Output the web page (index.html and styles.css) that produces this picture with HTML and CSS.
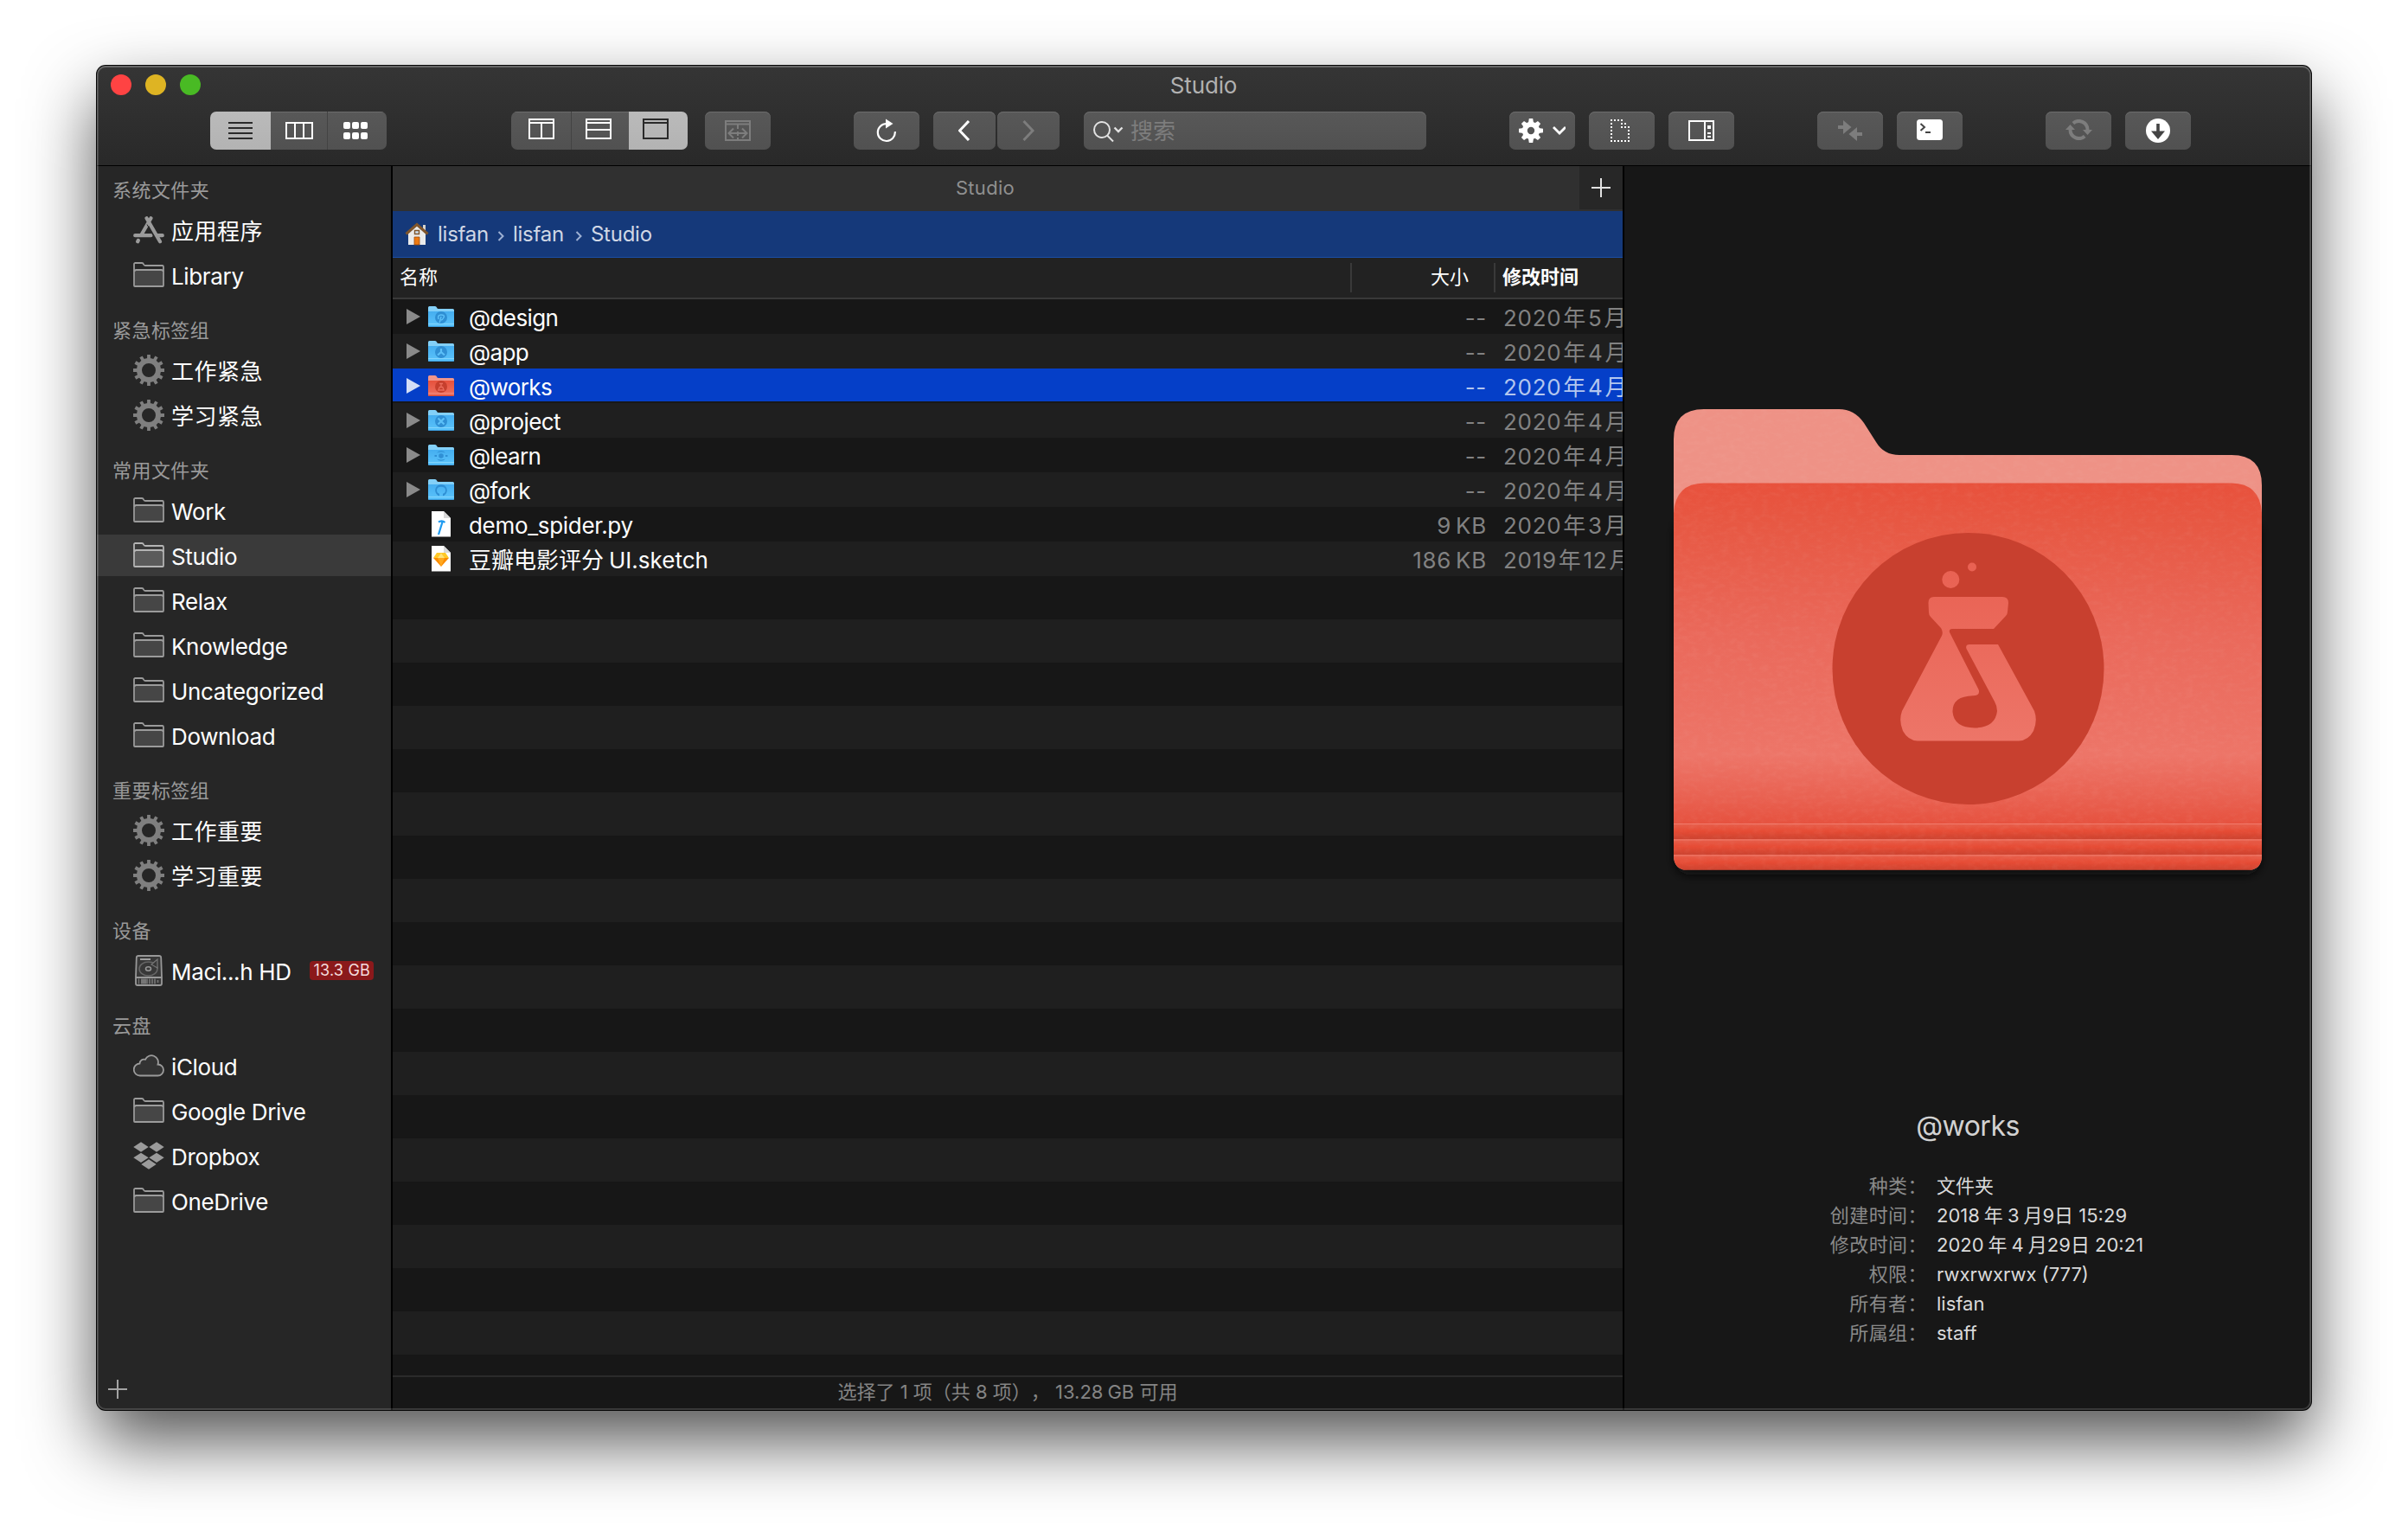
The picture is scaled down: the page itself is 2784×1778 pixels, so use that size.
FILE: index.html
```html
<!DOCTYPE html>
<html lang="zh-CN">
<head>
<meta charset="utf-8">
<title>Studio</title>
<link rel="stylesheet" href="styles.css">
</head>
<body>
<svg class="defs" width="0" height="0" aria-hidden="true">
  <defs>
    <linearGradient id="blueFace" x1="0" y1="0" x2="0" y2="1"><stop offset="0" stop-color="#45aef0"/><stop offset="1" stop-color="#5cc4fb"/></linearGradient>
    <linearGradient id="redFace" x1="0" y1="0" x2="0" y2="1"><stop offset="0" stop-color="#e6513c"/><stop offset="1" stop-color="#ee7263"/></linearGradient>
  </defs>
  <symbol id="folder" viewBox="0 0 36 30">
    <path d="M2 9.5h32V28H2z" fill="currentColor" opacity=".28"/>
    <path d="M1 27V2.5Q1 1 2.5 1H10q1.500 0 2 1.500T14 4h19.500Q35 4 35 5.500V27q0 1-1 1H2q-1 0-1-1zM1.500 11q0-2 2-2h29q2 0 2 2" fill="none" stroke="currentColor" stroke-width="1.800"/>
  </symbol>
  <symbol id="cog" viewBox="-18 -18 36 36">
    <circle r="11" fill="none" stroke="currentColor" stroke-width="6"/>
    <g stroke="currentColor" stroke-width="3.800">
      <path d="M0-18V-13M0 18V13M-18 0H-13M18 0H13"/>
      <path d="M0-18V-13M0 18V13M-18 0H-13M18 0H13" transform="rotate(30)"/>
      <path d="M0-18V-13M0 18V13M-18 0H-13M18 0H13" transform="rotate(60)"/>
    </g>
  </symbol>
  <symbol id="apps" viewBox="0 0 36 32">
    <g fill="none" stroke="currentColor" stroke-width="4.200" stroke-linecap="round">
      <path d="M20.500 2.200 10 20.500M5.800 28 5.200 29.200M15.500 2.200 31 29.200"/>
      <path d="M2.200 22.200H20.500M27.500 22.200H33.800"/>
    </g>
    <path d="M19.500 8.500 27 21.500" stroke="#262626" stroke-width="1" transform="translate(-3.500 1)"/>
  </symbol>
  <symbol id="disk" viewBox="0 0 32 36">
    <path d="M4 1h24q2 0 2.200 2L31 26v7q0 2-2 2H3q-2 0-2-2v-7L1.800 3Q2 1 4 1zM1 26h30" fill="#383838" stroke="#989898" stroke-width="1.800"/>
    <path d="M6 5h12" stroke="#a0a0a0" stroke-width="2"/>
    <ellipse cx="15.500" cy="16" rx="10.500" ry="8" fill="none" stroke="#666" stroke-width="1.500"/>
    <ellipse cx="15.500" cy="16" rx="3" ry="2.200" fill="none" stroke="#999" stroke-width="1.500"/>
    <path d="M26 5v10l-7-4z" fill="#383838" stroke="#777" stroke-width="1.200"/>
    <path d="M4 30.500h1M7 30.500h6" stroke="#777" stroke-width="6"/><path d="M14 27.500v6M17 27.500v6M20 27.500v6M23 27.500v6M26.500 29v3" stroke="#777" stroke-width="1.600"/>
  </symbol>
  <symbol id="cloud" viewBox="0 0 36 26">
    <path d="M8 24.500h20.500a6.500 6.500 0 0 0 0-13A7.800 7.800 0 0 0 14 5.800 5 5 0 0 0 7.500 10.500 7 7 0 0 0 8 24.500z" fill="#333" stroke="currentColor" stroke-width="1.800"/>
  </symbol>
  <symbol id="dropbox" viewBox="0 0 36 32">
    <path d="M9 .3 17.700 6 9 11.700.3 6zM27 .3 35.700 6 27 11.700 18.300 6zM9 12.700 17.700 18.200 9 23.900.3 18.200zM27 12.700 35.700 18.200 27 23.900 18.300 18.200zM18 20.300 26.700 26 18 31.700 9.300 26z" fill="currentColor"/>
  </symbol>
  <symbol id="dir-blue" viewBox="0 0 30 25">
    <path d="M0 1.500Q0 0 1.500 0h6.500q1.500 0 2 1.500t2 1.500h16.500Q30 3 30 4.500V10H0z" fill="#83d0f8"/>
    <path d="M0 6h30v16.500q0 1.500-1.500 1.500h-27Q0 24 0 22.500z" fill="url(#blueFace)"/>
    <path d="M0 20.500h30" stroke="#8fdcff" stroke-width=".8"/><path d="M.5 23.500h29" stroke="#3a9de0"/>
  </symbol>
  <symbol id="dir-red" viewBox="0 0 30 25">
    <path d="M0 1.500Q0 0 1.500 0h6.500q1.500 0 2 1.500t2 1.500h16.500Q30 3 30 4.500V10H0z" fill="#f0958a"/>
    <path d="M0 6h30v16.500q0 1.500-1.500 1.500h-27Q0 24 0 22.500z" fill="url(#redFace)"/>
    <path d="M0 20.500h30" stroke="#f29184" stroke-width=".8"/><path d="M.5 23.500h29" stroke="#d8432d"/>
  </symbol>
</svg>

<div class="window">
  <header class="titlebar">
    <div class="title-row">
      <div class="lights"><i class="light light-close"></i><i class="light light-min"></i><i class="light light-zoom"></i></div>
      <div class="title">Studio</div>
    </div>
    <div class="toolbar">
      <div class="segment">
        <button class="cell cell-first is-on"><svg width="28" height="20" viewBox="0 0 28 20"><path d="M0 1h28M0 7h28M0 13h28M0 19h28" stroke="#2a2a2a" stroke-width="2"/></svg></button>
        <button class="cell cell-mid"><svg width="32" height="20" viewBox="0 0 32 20"><path d="M1 1h30v18H1zM11 1v18M21 1v18" fill="none" stroke="#fff" stroke-width="2"/></svg></button>
        <button class="cell cell-last nudge"><svg width="28" height="20" viewBox="0 0 28 20" fill="#fff"><rect width="8" height="8" rx="2"/><rect x="10" width="8" height="8" rx="2"/><rect x="20" width="8" height="8" rx="2"/><rect y="12" width="8" height="8" rx="2"/><rect x="10" y="12" width="8" height="8" rx="2"/><rect x="20" y="12" width="8" height="8" rx="2"/></svg></button>
      </div>
      <div class="segment gap-xl">
        <button class="cell cell-first raised"><svg width="30" height="24" viewBox="0 0 30 24"><path d="M1 1h28v22H1zM1 5h28M15 5v18" fill="none" stroke="#fff" stroke-width="2"/></svg></button>
        <button class="cell cell-mid raised nudge"><svg width="30" height="24" viewBox="0 0 30 24"><path d="M1 1h28v22H1zM1 5h28M1 13h28" fill="none" stroke="#fff" stroke-width="2"/></svg></button>
        <button class="cell cell-last is-on raised nudge"><svg width="30" height="24" viewBox="0 0 30 24"><path d="M1 1h28v22H1zM1 5h28" fill="none" stroke="#2a2a2a" stroke-width="2"/></svg></button>
      </div>
      <button class="btn gap-s"><svg width="30" height="24" viewBox="0 0 30 24"><path d="M1 1h28v22H1zM1 4.500h28M15 5v5M15 13v5M15 20v3M5 15h20M10 9.500 4.500 15l5.500 5.500M20 9.500 25.500 15 20 20.500" fill="none" stroke="#7d7d7d" stroke-width="2"/></svg></button>
      <button class="btn gap-l"><svg width="26" height="28" viewBox="0 0 26 28"><path d="M22.800 15.200A10 10 0 1 1 13 6" fill="none" stroke="#fff" stroke-width="2.200"/><path d="M12 .5 20.500 6 12 11.500z" fill="#fff"/></svg></button>
      <button class="btn btn-nav gap-xs"><svg width="14" height="24" viewBox="0 0 14 24"><path d="M12 1 1.500 12 12 23" fill="none" stroke="#fff" stroke-width="3"/></svg></button>
      <button class="btn btn-nav gap-hair"><svg width="14" height="24" viewBox="0 0 14 24"><path d="M1.500 1 12 12 1.500 23" fill="none" stroke="#7d7d7d" stroke-width="3"/></svg></button>
      <div class="search">
        <svg width="36" height="26" viewBox="0 0 36 26"><g fill="none" stroke="#e2e2e2" stroke-width="2"><circle cx="11" cy="11" r="9"/><path d="M17 17.500 24 24.500"/><path d="M25.500 8.500 30 13 34.500 8.500" stroke-width="2.400"/></g></svg>
        <span>搜索</span>
      </div>
      <button class="btn gap-l"><svg width="54" height="28" viewBox="-14 -14 54 28"><g fill="#fff"><path d="M-2.200-14h4.400L3-9h-6zM-2.200 14h4.400L3 9h-6zM-14-2.200v4.400L-9 3v-6zM14-2.200v4.400L9 3v-6z"/><path d="M-2.200-13.500h4.400L3-9h-6zM-2.200 13.500h4.400L3 9h-6zM-13.500-2.200v4.400L-9 3v-6zM13.500-2.200v4.400L9 3v-6z" transform="rotate(45)"/></g><circle r="7.200" fill="none" stroke="#fff" stroke-width="6"/><path d="M26-4 33 3 40-4" fill="none" stroke="#fff" stroke-width="2.800"/></svg></button>
      <button class="btn gap-xs"><svg class="doc" width="22" height="26" viewBox="0 0 22 26"><path d="M0 1h14M1 4v20M0 25h22M21 12v12M12 5h6M12 9h10" fill="none" stroke="#fff" stroke-width="2" stroke-dasharray="2 2"/></svg></button>
      <button class="btn gap-xs"><svg width="30" height="24" viewBox="0 0 30 24"><path d="M1 1h28v22H1zM19 1v22" fill="none" stroke="#fff" stroke-width="2"/><path d="M22 6h4v4h-4zM22 14h4v2h-4zM22 18h4v2h-4z" fill="#fff"/></svg></button>
      <button class="btn gap-l"><svg width="28" height="24" viewBox="0 0 28 24" fill="#7d7d7d"><path d="M0 6h6V0l9.500 8L6 16v-6H0zM28 18h-6v6l-9.500-8L22 8v6h6z"/></svg></button>
      <button class="btn gap-xs"><svg class="lift" width="30" height="24" viewBox="0 0 30 24"><rect width="30" height="24" rx="3.500" fill="#fff"/><path d="M4.500 5 9 9 4.500 13M10 15h6" fill="none" stroke="#444" stroke-width="2"/></svg></button>
      <button class="btn gap-l"><svg class="lift" width="31" height="24" viewBox="0 0 31 24"><path d="M8.800 4.600A10 10 0 0 1 25.500 12M5.500 12A10 10 0 0 0 22.200 19.400" fill="none" stroke="#7d7d7d" stroke-width="4"/><path d="M0 12 5.500 6 11 12zM20 12h11l-5.500 6z" fill="#7d7d7d"/></svg></button>
      <button class="btn gap-xs"><svg width="28" height="28" viewBox="0 0 28 28"><circle cx="14" cy="14" r="14" fill="#fff"/><path d="M12.200 6h3.600v8.500H22L14 24 6 14.500h6.200z" fill="#444"/></svg></button>
    </div>
  </header>

  <div class="body">
    <aside class="sidebar">
      <section class="group">
        <h2>系统文件夹</h2>
        <div class="item cjk"><svg class="ic" width="36" height="32"><use href="#apps"/></svg><span>应用程序</span></div>
        <div class="item"><svg class="ic" width="36" height="30"><use href="#folder"/></svg><span>Library</span></div>
      </section>
      <section class="group">
        <h2>紧急标签组</h2>
        <div class="item cjk"><svg class="ic cog" width="36" height="36"><use href="#cog"/></svg><span>工作紧急</span></div>
        <div class="item cjk"><svg class="ic cog" width="36" height="36"><use href="#cog"/></svg><span>学习紧急</span></div>
      </section>
      <section class="group">
        <h2>常用文件夹</h2>
        <div class="item"><svg class="ic" width="36" height="30"><use href="#folder"/></svg><span>Work</span></div>
        <div class="item is-active"><svg class="ic" width="36" height="30"><use href="#folder"/></svg><span>Studio</span></div>
        <div class="item"><svg class="ic" width="36" height="30"><use href="#folder"/></svg><span>Relax</span></div>
        <div class="item"><svg class="ic" width="36" height="30"><use href="#folder"/></svg><span>Knowledge</span></div>
        <div class="item"><svg class="ic" width="36" height="30"><use href="#folder"/></svg><span>Uncategorized</span></div>
        <div class="item"><svg class="ic" width="36" height="30"><use href="#folder"/></svg><span>Download</span></div>
      </section>
      <section class="group">
        <h2>重要标签组</h2>
        <div class="item cjk"><svg class="ic cog" width="36" height="36"><use href="#cog"/></svg><span>工作重要</span></div>
        <div class="item cjk"><svg class="ic cog" width="36" height="36"><use href="#cog"/></svg><span>学习重要</span></div>
      </section>
      <section class="group">
        <h2>设备</h2>
        <div class="item"><svg class="ic" width="36" height="36"><use href="#disk"/></svg><span>Maci...h HD</span><b class="quota">13.3 GB</b></div>
      </section>
      <section class="group">
        <h2>云盘</h2>
        <div class="item"><svg class="ic" width="36" height="26"><use href="#cloud"/></svg><span>iCloud</span></div>
        <div class="item"><svg class="ic" width="36" height="30"><use href="#folder"/></svg><span>Google Drive</span></div>
        <div class="item"><svg class="ic" width="36" height="32"><use href="#dropbox"/></svg><span>Dropbox</span></div>
        <div class="item"><svg class="ic" width="36" height="30"><use href="#folder"/></svg><span>OneDrive</span></div>
      </section>
      <svg class="add-place" width="22" height="22" viewBox="0 0 22 22"><path d="M0 11h22M11 0v22" stroke="#a3a3a3" stroke-width="2"/></svg>
    </aside>

    <main class="files">
      <div class="tabs">
        <div class="tab">Studio</div>
        <button class="tab-add"><svg width="22" height="22" viewBox="0 0 22 22"><path d="M0 11h22M11 0v22" stroke="#e2e2e2" stroke-width="2"/></svg></button>
      </div>
      <nav class="path">
        <svg width="28" height="28" viewBox="0 0 28 28"><path d="M21 3h3v8h-3z" fill="#d8d4cc"/><path d="M4 13 14 4l10 9v13H4z" fill="#ebebeb"/><path d="M1.500 13.500 14 2.500l12.500 11" fill="none" stroke="#80562c" stroke-width="3"/><path d="M11.500 9.500h5v4h-5z" fill="#cfe2f5" stroke="#80562c" stroke-width="1.400"/><path d="M11 17h6v9h-6z" fill="#ee7a12" stroke="#9c4d0c" stroke-width=".8"/></svg>
        <span class="crumb crumb-a">lisfan</span><svg class="sep" width="8" height="12" viewBox="0 0 8 12"><path d="M1.500 1 6.500 6l-5 5" fill="none" stroke="#9db0d3" stroke-width="2"/></svg><span class="crumb crumb-b">lisfan</span><svg class="sep sep-b" width="8" height="12" viewBox="0 0 8 12"><path d="M1.500 1 6.500 6l-5 5" fill="none" stroke="#9db0d3" stroke-width="2"/></svg><span class="crumb">Studio</span>
      </nav>
      <div class="columns">
        <div class="col-name">名称</div>
        <div class="col-size">大小</div>
        <div class="col-date">修改时间</div>
      </div>
      <div class="rows">
        <div class="row dir"><i class="tri"></i><svg class="fi" width="30" height="25"><use href="#dir-blue"/><circle cx="15" cy="13" r="7" fill="#2f8fd4"/><path d="M12 15q-1.500-5 3-5t3 3-3 3M15 12l-1.800 7" fill="none" stroke="#5cc0f8" stroke-width="1.500"/></svg><span class="name">@design</span><span class="size">--</span><span class="date">2020<u></u>年<u></u>5<u></u>月</span></div>
        <div class="row dir alt"><i class="tri"></i><svg class="fi" width="30" height="25"><use href="#dir-blue"/><circle cx="15" cy="13" r="7" fill="#2f8fd4"/><path d="M15 9v4l-4 3.500M15 13l4 3.500" fill="none" stroke="#5cc0f8" stroke-width="2.200"/></svg><span class="name">@app</span><span class="size">--</span><span class="date">2020<u></u>年<u></u>4<u></u>月</span></div>
        <div class="row dir selected"><i class="tri"></i><svg class="fi" width="30" height="25"><use href="#dir-red"/><circle cx="15" cy="13" r="7" fill="#c63f2d"/><path d="M13 9.500h4M15 10v3M13.300 13.500h3.400l1.500 3.500h-6.400z" fill="none" stroke="#ea6c5c" stroke-width="1.300"/></svg><span class="name">@works</span><span class="size">--</span><span class="date">2020<u></u>年<u></u>4<u></u>月</span></div>
        <div class="row dir alt"><i class="tri"></i><svg class="fi" width="30" height="25"><use href="#dir-blue"/><circle cx="15" cy="13" r="7" fill="#2f8fd4"/><path d="M11.500 9.500 18.500 16.500M18.500 9.500 11.500 16.500" fill="none" stroke="#5cc0f8" stroke-width="2.200"/></svg><span class="name">@project</span><span class="size">--</span><span class="date">2020<u></u>年<u></u>4<u></u>月</span></div>
        <div class="row dir"><i class="tri"></i><svg class="fi" width="30" height="25"><use href="#dir-blue"/><path d="M10 9.500a6.500 6.500 0 0 1 10 0q-5-2-10 0zM10 16.500a6.500 6.500 0 0 0 10 0q-5 2-10 0zM7.500 12h2.500v2H7.500zM20 12h2.500v2H20z" fill="#2f8fd4"/><circle cx="15" cy="13" r="2.800" fill="#2f8fd4"/></svg><span class="name">@learn</span><span class="size">--</span><span class="date">2020<u></u>年<u></u>4<u></u>月</span></div>
        <div class="row dir alt"><i class="tri"></i><svg class="fi" width="30" height="25"><use href="#dir-blue"/><path d="M13 19.300v-2.600q-3-.7-3-4 0-4 5-4t5 4q0 3.300-3 4v2.600a6.800 6.800 0 1 0-4 0z" fill="#2f8fd4"/></svg><span class="name">@fork</span><span class="size">--</span><span class="date">2020<u></u>年<u></u>4<u></u>月</span></div>
        <div class="row"><i class="tri tri-none"></i><svg class="fi" width="30" height="30" viewBox="0 0 30 30"><path d="M4 0h14l8 8v21.500H4z" fill="#fff"/><path d="M18 0v8h8z" fill="#d9d9d9"/><path d="M12 12.500q4-2.500 7.500.5M16.500 12.500 12 27" fill="none" stroke="#1e9af0" stroke-width="2.200"/></svg><span class="name">demo_spider.py</span><span class="size">9<u></u>KB</span><span class="date">2020<u></u>年<u></u>3<u></u>月</span></div>
        <div class="row alt"><i class="tri tri-none"></i><svg class="fi" width="30" height="30" viewBox="0 0 30 30"><path d="M4 0h14l8 8v21.500H4z" fill="#fff"/><path d="M18 0v8h8z" fill="#d9d9d9"/><path d="M10 8h10l4 6H6z" fill="#ffc928"/><path d="M11 14 15 8.500 19 14z" fill="#ffe27a"/><path d="M6 14h18l-9 10z" fill="#fb8c00"/><path d="M11 14h8l-4 10z" fill="#ffa81f"/></svg><span class="name name-cjk">豆瓣电影评分<u></u>UI.sketch</span><span class="size">186<u></u>KB</span><span class="date">2019<u></u>年<u></u>12<u></u>月</span></div>
        <div class="filler"></div>
      </div>
      <footer class="status">选择了 1 项（共 8 项）， 13.28<u></u>GB 可用</footer>
    </main>

    <section class="preview">
      <svg class="art" width="700" height="560" viewBox="1925 463 700 560">
        <defs>
          <linearGradient id="face" x1="0" y1="558" x2="0" y2="952" gradientUnits="userSpaceOnUse"><stop offset="0" stop-color="#e8513c"/><stop offset=".12" stop-color="#e75843"/><stop offset=".45" stop-color="#ea695b"/><stop offset=".8" stop-color="#ed7568"/><stop offset=".92" stop-color="#e96252"/><stop offset="1" stop-color="#e6523f"/></linearGradient>
          <linearGradient id="flask" x1="0" y1="650" x2="0" y2="856" gradientUnits="userSpaceOnUse"><stop offset="0" stop-color="#e96152"/><stop offset="1" stop-color="#ed7568"/></linearGradient>
          <linearGradient id="fold" x1="0" y1="0" x2="0" y2="1"><stop offset="0" stop-color="#e7604d"/><stop offset=".5" stop-color="#e64b34"/><stop offset="1" stop-color="#cc4330"/></linearGradient>
          <clipPath id="front"><path d="M1935 593Q1937 559 1970 558.500H2580Q2613 559 2615 593V989Q2615 1006 2598 1006H1952Q1935 1006 1935 989z"/></clipPath>
          <clipPath id="whole"><path d="M1935 508Q1935 473 1970 473H2126Q2144 473 2155 489L2169 511Q2178 526 2196 526H2580Q2615 526 2615 561V989Q2615 1006 2598 1006H1952Q1935 1006 1935 989z"/></clipPath>
          <filter id="grain" x="0" y="0" width="100%" height="100%"><feTurbulence type="fractalNoise" baseFrequency=".11 .2" numOctaves="3" seed="4"/><feColorMatrix values="0 0 0 0 1  0 0 0 0 .8  0 0 0 0 .75  .9 0 0 0 -.36"/></filter>
          <filter id="drop" x="-5%" y="-5%" width="110%" height="112%"><feGaussianBlur stdDeviation="6"/></filter>
        </defs>
        <rect x="1937" y="600" width="676" height="411" rx="16" fill="#0c0c0c" filter="url(#drop)"/>
        <path d="M1935 508Q1935 473 1970 473H2126Q2144 473 2155 489L2169 511Q2178 526 2196 526H2580Q2615 526 2615 561V989Q2615 1006 2598 1006H1952Q1935 1006 1935 989z" fill="#ee9286"/>
        <g clip-path="url(#front)">
          <rect x="1935" y="558" width="680" height="395" fill="url(#face)"/>
          <rect x="1935" y="952" width="680" height="18" fill="url(#fold)"/>
          <rect x="1935" y="970" width="680" height="18" fill="url(#fold)"/>
          <rect x="1935" y="988" width="680" height="18" fill="url(#fold)"/>
          <path d="M1935 952.500h680M1935 971h680M1935 989h680" stroke="#f07a6b"/>
          <path d="M1935 1005.500h680" stroke="#a93a2a"/>
        </g>
        <rect x="1935" y="473" width="680" height="533" clip-path="url(#whole)" filter="url(#grain)" opacity=".13"/>
        <circle cx="2275.500" cy="773" r="157" fill="#c8402f"/>
        <g fill="url(#flask)">
          <circle cx="2255.300" cy="670" r="10"/><circle cx="2280" cy="655.500" r="5"/>
          <path d="M2236 690H2315Q2322 690 2322 697L2321 707Q2321 710 2319 712L2305 727H2257Q2253 727 2254 731L2287.500 797Q2290 804 2281 804.300Q2257 805 2257.500 823Q2259 841 2283 841.500Q2307 841 2309 822Q2309 816 2306 811L2273.500 750Q2272 745 2277 745H2310L2352 822Q2356 833 2351 845Q2345 856 2334 856.500H2217Q2206 856 2200 845Q2195 833 2199 822L2245 735Q2247 730 2244 726L2232 713Q2230 711 2230 708L2229.500 697Q2229.500 690 2236 690z"/>
        </g>
      </svg>
      <h1>@works</h1>
      <dl class="info">
        <dt>种类：</dt><dd>文件夹</dd>
        <dt>创建时间：</dt><dd>2018<u></u>年<u></u>3<u></u>月9日 15:29</dd>
        <dt>修改时间：</dt><dd>2020<u></u>年<u></u>4<u></u>月29日 20:21</dd>
        <dt>权限：</dt><dd>rwxrwxrwx (777)</dd>
        <dt>所有者：</dt><dd>lisfan</dd>
        <dt>所属组：</dt><dd>staff</dd>
      </dl>
    </section>
  </div>
</div>
</body>
</html>
```
FILE: styles.css
```css
* { box-sizing: border-box; margin: 0; padding: 0; }

body {
  width: 2784px;
  height: 1778px;
  padding: 76px 112px 0;
  overflow: hidden;
  background: #fff;
  font: 26px/1 Inter, "Noto Sans CJK SC", sans-serif;
  text-spacing-trim: space-all;
  text-autospace: no-autospace;
  color: #fff;
}

svg { display: block; flex: none; }
.defs { position: absolute; }
u { display: inline-block; width: 5px; text-decoration: none; }
button { border: 0; font: inherit; color: inherit; }
h1, h2 { font-weight: 400; }

.window {
  position: relative;
  display: flex;
  flex-direction: column;
  width: 2560px;
  height: 1554px;
  border-radius: 10px;
  background: #171717;
  box-shadow: 0 0 0 1px #050505, 0 36px 80px rgba(0, 0, 0, .68);
}

/* light rim drawn over every pane */
.window::after {
  content: "";
  position: absolute;
  inset: 0;
  border-radius: 10px;
  box-shadow: inset 0 0 0 2px rgba(255, 255, 255, .15), inset 0 1px 0 1px rgba(255, 255, 255, .12);
  pointer-events: none;
}

/* title bar */
.titlebar {
  height: 116px;
  border-bottom: 1px solid #000;
  border-radius: 10px 10px 0 0;
  background: linear-gradient(#353535, #292929);
}
.title-row { display: grid; grid-template-columns: 1fr auto 1fr; align-items: center; height: 46px; }
.lights { display: flex; gap: 16px; padding: 0 0 2px 16px; }
.light { width: 24px; height: 24px; border-radius: 50%; }
.light-close { background: #ff4343; }
.light-min { background: #deb423; }
.light-zoom { background: #49ba24; }
.title { padding-right: 1px; letter-spacing: -.15px; color: #b1b1b1; }

.toolbar { display: flex; align-items: center; height: 58px; padding-left: 131px; }
.btn, .cell, .search {
  display: flex;
  align-items: center;
  justify-content: center;
  height: 44px;
  background: linear-gradient(#585858, #515151);
  box-shadow: inset 0 1px 0 #6c6c6c;
}
.segment { display: flex; height: 44px; border-radius: 7px; overflow: hidden; }
.cell-first { width: 70px; }
.cell-mid { width: 66px; border-right: 1px solid #434343; }
.cell-last { width: 68px; }
.raised { padding-bottom: 4px; }
.raised.cell-first { border-right: 1px solid #434343; }
.raised.cell-mid { border-right: 0; }
.nudge { padding-right: 4px; }
.raised.is-on { padding-right: 6px; }
.is-on { background: linear-gradient(#bababa, #b3b3b3); box-shadow: none; }
.btn { width: 76px; border-radius: 7px; }
.btn-nav { width: 72px; }
.doc { margin-right: 4px; }
.lift { margin-bottom: 2px; }
.gap-xl { margin-left: 144px; }
.gap-l { margin-left: 96px; }
.gap-s { margin-left: 20px; }
.gap-xs { margin-left: 16px; }
.gap-hair { margin-left: 2px; }
.search {
  justify-content: flex-start;
  gap: 8px;
  width: 396px;
  margin-left: 28px;
  padding: 2px 10px 0;
  border-radius: 7px;
  color: #7d7d7d;
}

/* panes */
.body { display: flex; flex: 1; min-height: 0; }

.sidebar {
  display: flex;
  flex-direction: column;
  width: 342px;
  padding-top: 8px;
  border-right: 2px solid #000;
  border-radius: 0 0 0 10px;
  background: #262626;
}
.group { display: flex; flex-direction: column; margin-bottom: 18px; }
.group h2 { padding-left: 18px; font-size: 22px; line-height: 40px; letter-spacing: .45px; color: #9a9a9a; }
.item {
  display: flex;
  align-items: center;
  height: 48px;
  margin: 2px 0;
  padding-left: 42px;
  letter-spacing: -.35px;
}
.cjk { letter-spacing: .5px; }
.item .ic { margin-right: 8px; color: #9b9b9b; }
.item .cog { color: #7f7f7f; }
.item span { padding-top: 3px; }
.is-active { background: #3a3a3a; }
.is-active .ic { color: #b4b4b4; }
.quota {
  margin: 0 20px 0 auto;
  padding: 0 4px;
  border-radius: 4px;
  background: #8b191b;
  font-size: 18px;
  line-height: 22px;
  font-weight: 400;
  letter-spacing: .2px;
  color: #f3dcdc;
}
.add-place { margin: auto 0 13px 13px; }

.files { display: flex; flex-direction: column; width: 1424px; border-right: 2px solid #000; }
.tabs { display: flex; height: 52px; background: #303030; }
.tab { flex: 1; padding-right: 2px; text-align: center; font-size: 22px; line-height: 50px; letter-spacing: .3px; color: #8f8f8f; }
.tab-add { display: flex; align-items: center; justify-content: center; width: 50px; height: 50px; background: #272727; }

.path {
  display: flex;
  align-items: center;
  height: 54px;
  padding-left: 14px;
  border-bottom: 1px solid #1b4fa8;
  background: #15397a;
  font-size: 24px;
  letter-spacing: -.25px;
  color: #d0d7e5;
}
.crumb-a { margin-left: 10px; }
.sep { margin: 4px 10px 0; }
.sep-b { margin-left: 13px; }

.columns {
  display: flex;
  align-items: center;
  height: 48px;
  border-bottom: 2px solid #393939;
  background: #222;
  font-size: 22px;
  line-height: 32px;
}
.columns > div { height: 34px; }
.col-name { width: 1109px; padding-left: 8px; border-right: 2px solid #393939; }
.col-size { width: 166px; padding-right: 29px; border-right: 2px solid #393939; text-align: right; }
.col-date { padding-left: 8px; font-weight: 700; }

.rows { display: flex; flex: 1; flex-direction: column; min-height: 0; }
.row {
  display: flex;
  align-items: center;
  height: 40px;
  padding-left: 16px;
  background: #171717;
  overflow: hidden;
}
.alt { background: #1f1f1f; }
.selected { background: linear-gradient(#053fc8 38px, #171717 38px); }
.tri { width: 16px; height: 18px; background: #8a8a8a; clip-path: polygon(0 0, 100% 50%, 0 100%); }
.tri-none { visibility: hidden; }
.selected .tri { background: #d3def6; }
.fi { margin: 0 17px 0 9px; }
.name, .size, .date { padding-top: 3px; white-space: nowrap; }
.name { flex: 1; letter-spacing: -.3px; }
.dir .name { letter-spacing: -.6px; }
.row .name-cjk { letter-spacing: 0; }
.name-cjk u { width: 6px; }
.size, .date { letter-spacing: .7px; color: #828282; }
.date { width: 157px; padding-left: 19px; overflow: hidden; line-height: 32px; }
.date u { width: 2px; }
.selected .size, .selected .date { color: #b3c6ee; }
.filler { flex: 1; background: repeating-linear-gradient(#171717 0 50px, #1f1f1f 50px 100px); }

.status {
  height: 40px;
  border-top: 2px solid #2b2b2b;
  text-align: center;
  font-size: 22px;
  line-height: 34px;
  color: #848484;
}

.preview { display: flex; flex: 1; flex-direction: column; align-items: center; padding-top: 271px; }
.preview h1 { margin-top: 259px; font-size: 32px; line-height: 40px; letter-spacing: -.5px; color: #d2d2d2; }
.info {
  display: grid;
  grid-template-columns: 350px 1fr;
  column-gap: 11px;
  width: 794px;
  margin-top: 32px;
  font-size: 22px;
  line-height: 34px;
}
.info dt { text-align: right; letter-spacing: .45px; color: #8a8a8a; }
.info dd { letter-spacing: 0; color: #dadada; }
```
